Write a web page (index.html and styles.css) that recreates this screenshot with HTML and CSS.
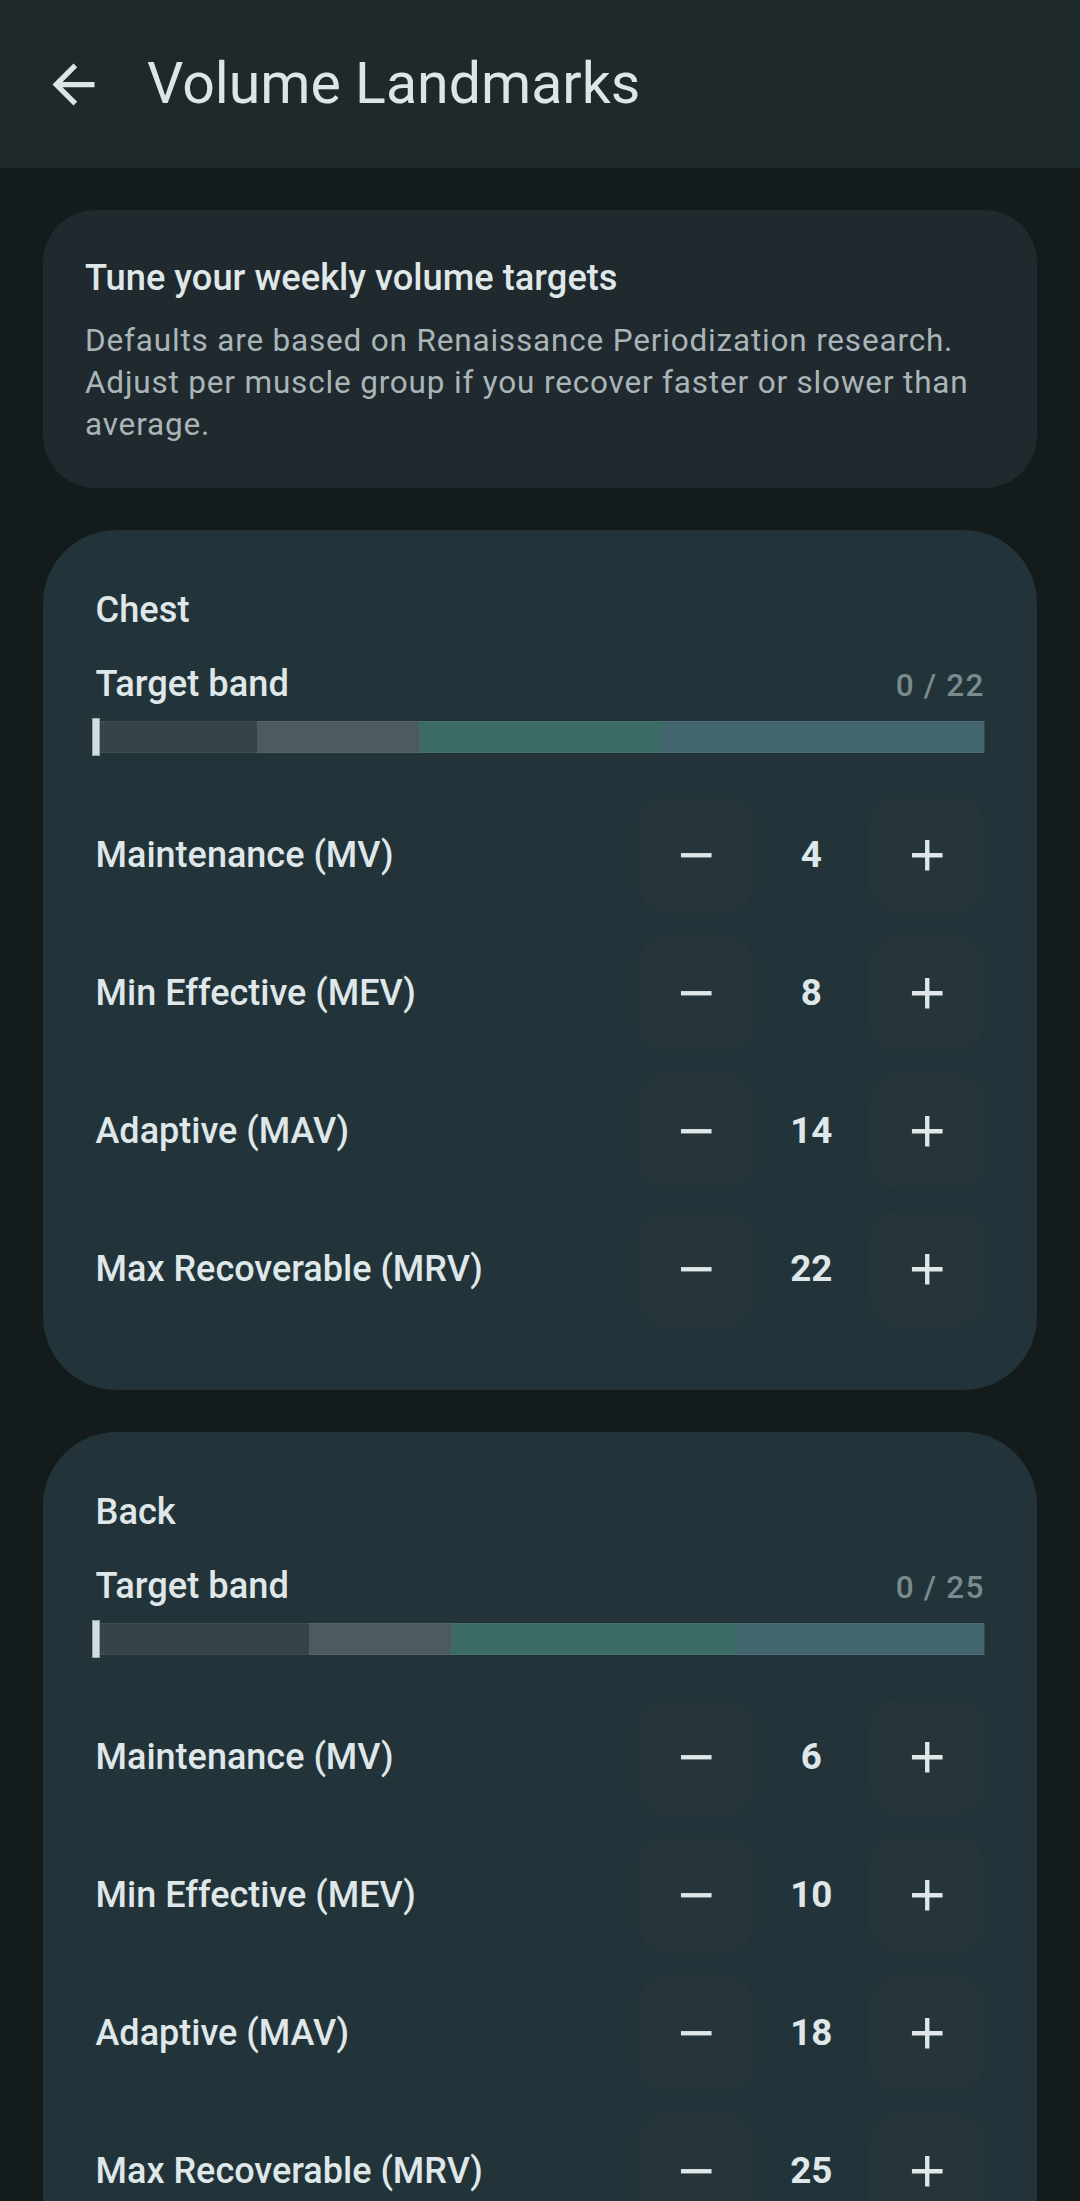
FILE: index.html
```html
<!DOCTYPE html>
<html lang="en">
<head>
<meta charset="utf-8">
<title>Volume Landmarks</title>
<link rel="stylesheet" href="styles.css">
</head>
<body>
<div class="screen">
  <header class="appbar">
    <button class="nav-btn" aria-label="Back">
      <svg viewBox="0 0 24 24" class="nav-icon"><path d="M20 11H7.83l5.59-5.59L12 4l-8 8 8 8 1.41-1.41L7.83 13H20v-2z"/></svg>
    </button>
    <h1 class="appbar-title">Volume Landmarks</h1>
  </header>

  <main class="content">
    <section class="info-card">
      <h2 class="info-title">Tune your weekly volume targets</h2>
      <p class="info-text">Defaults are based on Renaissance Periodization research. Adjust per muscle group if you recover faster or slower than average.</p>
    </section>

    <section class="muscle-card">
      <h3 class="muscle-name">Chest</h3>
      <div class="band-head">
        <span class="band-label">Target band</span>
        <span class="band-count">0 / 22</span>
      </div>
      <div class="bar">
        <span class="seg seg-mv" style="width:18.18%"></span>
        <span class="seg seg-mev" style="width:18.18%"></span>
        <span class="seg seg-mav" style="width:27.27%"></span>
        <span class="seg seg-mrv" style="width:36.37%"></span>
        <span class="marker" style="left:0%"></span>
      </div>
      <div class="rows">
        <div class="row"><span class="row-label">Maintenance (MV)</span><div class="stepper"><button class="step-btn" aria-label="Decrease"><svg viewBox="0 0 24 24"><path d="M19 13H5v-2h14v2z"/></svg></button><span class="step-val">4</span><button class="step-btn" aria-label="Increase"><svg viewBox="0 0 24 24"><path d="M19 13h-6v6h-2v-6H5v-2h6V5h2v6h6v2z"/></svg></button></div></div>
        <div class="row"><span class="row-label">Min Effective (MEV)</span><div class="stepper"><button class="step-btn" aria-label="Decrease"><svg viewBox="0 0 24 24"><path d="M19 13H5v-2h14v2z"/></svg></button><span class="step-val">8</span><button class="step-btn" aria-label="Increase"><svg viewBox="0 0 24 24"><path d="M19 13h-6v6h-2v-6H5v-2h6V5h2v6h6v2z"/></svg></button></div></div>
        <div class="row"><span class="row-label">Adaptive (MAV)</span><div class="stepper"><button class="step-btn" aria-label="Decrease"><svg viewBox="0 0 24 24"><path d="M19 13H5v-2h14v2z"/></svg></button><span class="step-val">14</span><button class="step-btn" aria-label="Increase"><svg viewBox="0 0 24 24"><path d="M19 13h-6v6h-2v-6H5v-2h6V5h2v6h6v2z"/></svg></button></div></div>
        <div class="row"><span class="row-label">Max Recoverable (MRV)</span><div class="stepper"><button class="step-btn" aria-label="Decrease"><svg viewBox="0 0 24 24"><path d="M19 13H5v-2h14v2z"/></svg></button><span class="step-val">22</span><button class="step-btn" aria-label="Increase"><svg viewBox="0 0 24 24"><path d="M19 13h-6v6h-2v-6H5v-2h6V5h2v6h6v2z"/></svg></button></div></div>
      </div>
    </section>

    <section class="muscle-card">
      <h3 class="muscle-name">Back</h3>
      <div class="band-head">
        <span class="band-label">Target band</span>
        <span class="band-count">0 / 25</span>
      </div>
      <div class="bar">
        <span class="seg seg-mv" style="width:24%"></span>
        <span class="seg seg-mev" style="width:16%"></span>
        <span class="seg seg-mav" style="width:32%"></span>
        <span class="seg seg-mrv" style="width:28%"></span>
        <span class="marker" style="left:0%"></span>
      </div>
      <div class="rows">
        <div class="row"><span class="row-label">Maintenance (MV)</span><div class="stepper"><button class="step-btn" aria-label="Decrease"><svg viewBox="0 0 24 24"><path d="M19 13H5v-2h14v2z"/></svg></button><span class="step-val">6</span><button class="step-btn" aria-label="Increase"><svg viewBox="0 0 24 24"><path d="M19 13h-6v6h-2v-6H5v-2h6V5h2v6h6v2z"/></svg></button></div></div>
        <div class="row"><span class="row-label">Min Effective (MEV)</span><div class="stepper"><button class="step-btn" aria-label="Decrease"><svg viewBox="0 0 24 24"><path d="M19 13H5v-2h14v2z"/></svg></button><span class="step-val">10</span><button class="step-btn" aria-label="Increase"><svg viewBox="0 0 24 24"><path d="M19 13h-6v6h-2v-6H5v-2h6V5h2v6h6v2z"/></svg></button></div></div>
        <div class="row"><span class="row-label">Adaptive (MAV)</span><div class="stepper"><button class="step-btn" aria-label="Decrease"><svg viewBox="0 0 24 24"><path d="M19 13H5v-2h14v2z"/></svg></button><span class="step-val">18</span><button class="step-btn" aria-label="Increase"><svg viewBox="0 0 24 24"><path d="M19 13h-6v6h-2v-6H5v-2h6V5h2v6h6v2z"/></svg></button></div></div>
        <div class="row"><span class="row-label">Max Recoverable (MRV)</span><div class="stepper"><button class="step-btn" aria-label="Decrease"><svg viewBox="0 0 24 24"><path d="M19 13H5v-2h14v2z"/></svg></button><span class="step-val">25</span><button class="step-btn" aria-label="Increase"><svg viewBox="0 0 24 24"><path d="M19 13h-6v6h-2v-6H5v-2h6V5h2v6h6v2z"/></svg></button></div></div>
      </div>
    </section>
  </main>
</div>
</body>
</html>
```

FILE: styles.css
```css
* { box-sizing: border-box; }

html, body {
  margin: 0;
  padding: 0;
  background: #141b1d;
}

body {
  font-family: Roboto, "Noto Sans", "Liberation Sans", sans-serif;
  color: #dfe7e9;
}

.screen {
  width: 1080px;
  min-height: 2201px;
  background: #141b1d;
}

.appbar {
  height: 168px;
  background: #1f292c;
  display: flex;
  align-items: center;
  padding-left: 10.5px;
}

.nav-btn {
  width: 126px;
  height: 126px;
  border: 0;
  padding: 0;
  background: transparent;
  display: flex;
  align-items: center;
  justify-content: center;
}

.nav-icon {
  width: 63px;
  height: 63px;
  fill: #dde5e7;
}

.appbar-title {
  margin: 0 0 0 10.5px;
  font-weight: 400;
  font-size: 57.25px;
  line-height: 73.5px;
  color: #dde5e7;
}

.content {
  display: flex;
  flex-direction: column;
  gap: 42px;
  padding: 42px 43px 42px 43px;
}

.info-card {
  background: #20292d;
  border-radius: 52.5px;
  padding: 42px;
}

.info-title {
  margin: 0;
  font-size: 36.25px;
  line-height: 52.5px;
  font-weight: 500;
  letter-spacing: 0;
  color: #dfe7e9;
}

.info-text {
  margin: 15.75px 0 0 0;
  font-size: 31.5px;
  line-height: 42px;
  font-weight: 400;
  letter-spacing: 0.82px;
  color: #a9b5b8;
}

.muscle-card {
  background: #22343a;
  border-radius: 73.5px;
  padding: 53.5px 52.5px 52.5px 52.5px;
}

.muscle-name {
  margin: 0;
  font-size: 36.25px;
  line-height: 52.5px;
  font-weight: 500;
  letter-spacing: 0;
  color: #dfe7e9;
}

.band-head {
  margin-top: 22px;
  display: flex;
  justify-content: space-between;
  align-items: baseline;
}

.band-label {
  font-size: 36.25px;
  line-height: 52.5px;
  font-weight: 500;
  letter-spacing: 0;
}

.band-count {
  font-size: 31.5px;
  line-height: 42px;
  font-weight: 500;
  letter-spacing: 1.2px;
  color: #7b8a8e;
}

.bar {
  position: relative;
  margin-top: 10.5px;
  height: 31.5px;
  display: flex;
  background: #3a474b;
}

.seg {
  display: block;
  height: 100%;
  border-top: 1.5px solid rgba(255,255,255,0.05);
  border-bottom: 1.5px solid rgba(255,255,255,0.05);
}

.seg-mv { background: #36444a; }
.seg-mev { background: #4f5a60; }
.seg-mav { background: #3d6b66; }
.seg-mrv { background: #43656d; }

.marker {
  position: absolute;
  top: -3px;
  width: 8px;
  height: 37.5px;
  margin-left: -4px;
  background: #d3dcde;
  border: 1px solid #9aa6a9;
}

.rows {
  margin-top: 33px;
  display: flex;
  flex-direction: column;
}

.row {
  height: 138px;
  display: flex;
  align-items: center;
  justify-content: space-between;
}

.row-label {
  font-size: 36px;
  line-height: 52.5px;
  font-weight: 500;
  letter-spacing: 0;
  color: #dfe7e9;
}

.stepper {
  display: flex;
  align-items: center;
}

.step-btn {
  width: 115.5px;
  height: 115.5px;
  border: 0;
  padding: 0;
  border-radius: 30px;
  background: #26353a;
  display: flex;
  align-items: center;
  justify-content: center;
}

.step-btn svg {
  width: 52.5px;
  height: 52.5px;
  fill: #dfe7e9;
}

.step-val {
  width: 115.5px;
  text-align: center;
  font-size: 36.75px;
  line-height: 52.5px;
  font-weight: 700;
  color: #dfe7e9;
}
```
